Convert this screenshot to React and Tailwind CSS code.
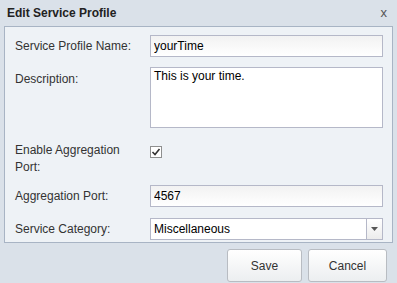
import React, { useState } from "react";

const font = { fontFamily: '"Liberation Sans", Arial, sans-serif' };

const EditServiceProfile = () => {
  const [formData, setFormData] = useState({
    name: "yourTime",
    description: "This is your time.",
    aggregation: true,
    port: "4567",
    category: "Miscellaneous",
  });

  const handleChange = (e) => {
    const { name, value, type, checked } = e.target;
    setFormData((prev) => ({
      ...prev,
      [name]: type === "checkbox" ? checked : value,
    }));
  };

  const inputClass =
    "h-[22px] w-full border border-[#b5b8c8] bg-white px-[3px] text-[12px] text-black outline-none bg-gradient-to-b from-[#f2f2f2] to-white";

  return (
    <div
      className="flex h-[283px] w-[397px] flex-col bg-[#dae1e9] text-[12px] text-[#333]"
      style={font}
    >
      {/* header */}
      <div className="flex h-[26px] items-center justify-between px-[7px]">
        <span className="font-bold text-[#222]">Edit Service Profile</span>
        <span className="mr-[3px] text-[13px] text-[#555]">x</span>
      </div>

      {/* body */}
      <div className="mx-[4px] h-[217px] border border-[#a8b4c4] bg-[#eef2f6]">
        <div className="flex flex-col pl-[10px] pr-[9px] pt-[8px]">
          <div className="flex h-[22px] items-center">
            <label className="w-[135px] shrink-0">Service Profile Name:</label>
            <input
              name="name"
              value={formData.name}
              onChange={handleChange}
              className={inputClass}
            />
          </div>

          <div className="mt-[10px] flex">
            <label className="w-[135px] shrink-0 pt-[3px]">Description:</label>
            <textarea
              name="description"
              value={formData.description}
              onChange={handleChange}
              className="h-[61px] w-full resize-none border border-[#b5b8c8] bg-white px-[3px] pt-[1px] text-[12px] leading-[15px] text-black outline-none"
            />
          </div>

          <div className="mt-[14px] flex items-start">
            <label className="w-[135px] shrink-0 leading-[17px]">
              Enable Aggregation
              <br />
              Port:
            </label>
            <label className="mt-[4px] flex h-[12px] w-[12px] items-center justify-center border border-[#8e8f8f] bg-white">
              <input
                type="checkbox"
                name="aggregation"
                checked={formData.aggregation}
                onChange={handleChange}
                className="hidden"
              />
              {formData.aggregation && (
                <svg width="10" height="10" viewBox="0 0 10 10">
                  <path
                    d="M1.5 5 L4 7.5 L8.5 2"
                    fill="none"
                    stroke="#333"
                    strokeWidth="1.6"
                  />
                </svg>
              )}
            </label>
          </div>

          <div className="mt-[9px] flex h-[22px] items-center">
            <label className="w-[135px] shrink-0">Aggregation Port:</label>
            <input
              name="port"
              value={formData.port}
              onChange={handleChange}
              className={inputClass}
            />
          </div>

          <div className="mt-[11px] flex h-[22px] items-center">
            <label className="w-[135px] shrink-0">Service Category:</label>
            <div className="flex h-[22px] w-full border border-[#b5b8c8] bg-white">
              <span className="flex-1 px-[3px] leading-[20px] text-black">
                {formData.category}
              </span>
              <div className="flex w-[16px] items-center justify-center border-l border-[#b5b8c8] bg-gradient-to-b from-white to-[#ececec]">
                <svg width="7" height="4" viewBox="0 0 7 4">
                  <path d="M0 0 H7 L3.5 4 Z" fill="#555" />
                </svg>
              </div>
            </div>
          </div>
        </div>
      </div>

      {/* footer */}
      <div className="flex justify-end gap-[6px] pr-[10px] pt-[6px]">
        <button className="h-[33px] w-[75px] rounded-[3px] border border-[#b8bcc2] bg-gradient-to-b from-white to-[#eceef0] text-[12px] text-[#333]">
          Save
        </button>
        <button className="h-[33px] w-[79px] rounded-[3px] border border-[#b8bcc2] bg-gradient-to-b from-white to-[#eceef0] text-[12px] text-[#333]">
          Cancel
        </button>
      </div>
    </div>
  );
};

export default function App() {
  return <EditServiceProfile />;
}
